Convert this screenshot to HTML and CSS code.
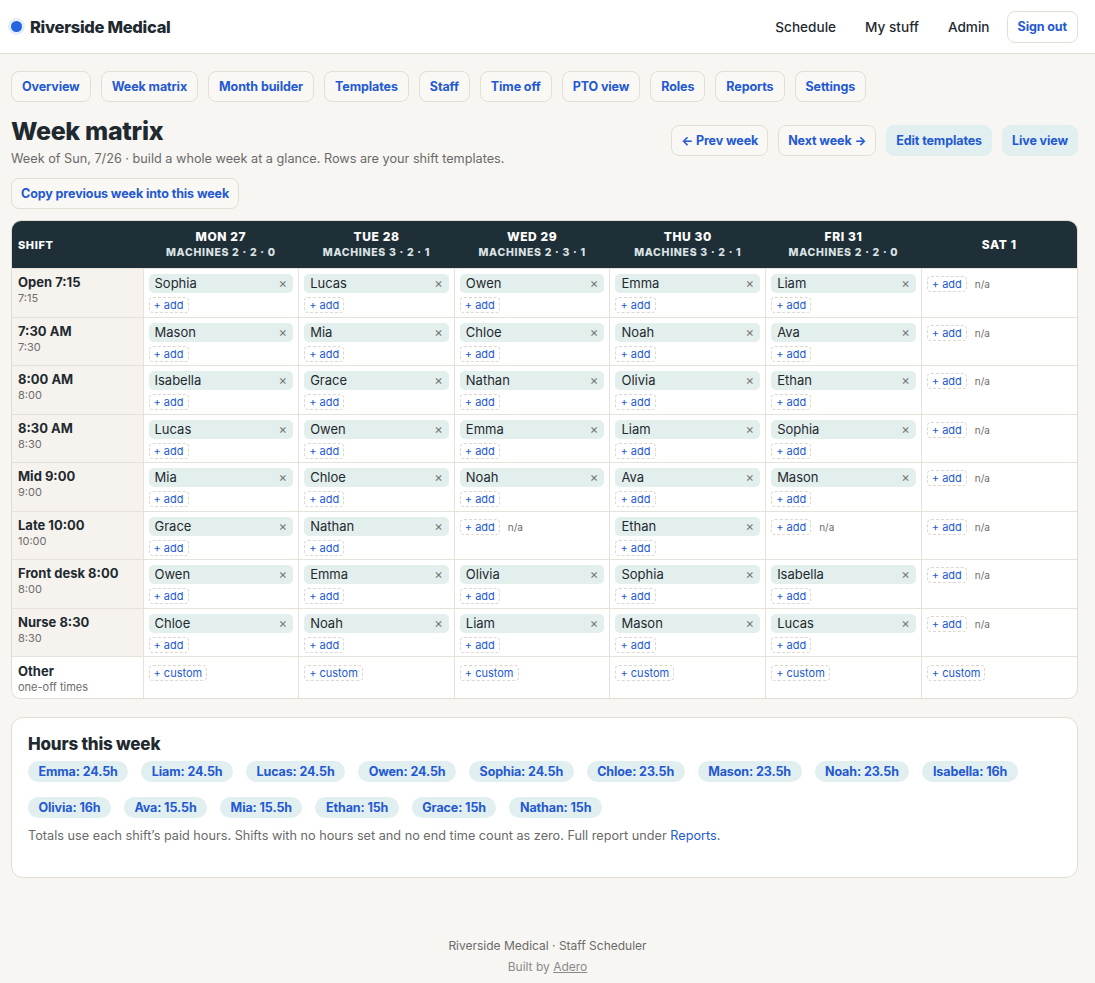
FILE: index.html
```html
<!DOCTYPE html>
<html>
	<head>
		<meta charset="UTF-8">
		<title>Week matrix · Riverside Medical</title>
		<link rel="stylesheet" href="styles.css">
	</head>
	<body>
		<header class="topbar">
			<div class="brand"><span class="dot"></span>Riverside Medical</div>
			<nav class="topnav">
				<a href="#">Schedule</a>
				<a href="#">My stuff</a>
				<a href="#">Admin</a>
				<button class="btn">Sign out</button>
			</nav>
		</header>
		<div class="page">
			<div class="tabs">
				<button class="btn">Overview</button>
				<button class="btn">Week matrix</button>
				<button class="btn">Month builder</button>
				<button class="btn">Templates</button>
				<button class="btn">Staff</button>
				<button class="btn">Time off</button>
				<button class="btn">PTO view</button>
				<button class="btn">Roles</button>
				<button class="btn">Reports</button>
				<button class="btn">Settings</button>
			</div>
			<div class="titlerow">
				<div>
					<h1>Week matrix</h1>
					<p class="sub">Week of Sun, 7/26 · build a whole week at a glance. Rows are your shift templates.</p>
					<button class="btn">Copy previous week into this week</button>
				</div>
				<div class="actions">
					<button class="btn">&larr; Prev week</button>
					<button class="btn">Next week &rarr;</button>
					<button class="btn soft">Edit templates</button>
					<button class="btn soft">Live view</button>
				</div>
			</div>

			<div class="matrix">
				<table>
					<colgroup>
						<col class="c-shift"><col><col><col><col><col><col>
					</colgroup>
					<thead>
						<tr>
							<th class="left">SHIFT</th>
							<th>MON 27<span>MACHINES 2 · 2 · 0</span></th>
							<th>TUE 28<span>MACHINES 3 · 2 · 1</span></th>
							<th>WED 29<span>MACHINES 2 · 3 · 1</span></th>
							<th>THU 30<span>MACHINES 3 · 2 · 1</span></th>
							<th>FRI 31<span>MACHINES 2 · 2 · 0</span></th>
							<th>SAT 1</th>
						</tr>
					</thead>
					<tbody>
						<tr>
							<td class="shift"><b>Open 7:15</b><small>7:15</small></td>
							<td><div class="chip">Sophia<i>&times;</i></div><span class="add">+ add</span></td>
							<td><div class="chip">Lucas<i>&times;</i></div><span class="add">+ add</span></td>
							<td><div class="chip">Owen<i>&times;</i></div><span class="add">+ add</span></td>
							<td><div class="chip">Emma<i>&times;</i></div><span class="add">+ add</span></td>
							<td><div class="chip">Liam<i>&times;</i></div><span class="add">+ add</span></td>
							<td><div class="na"><span class="add">+ add</span>n/a</div></td>
						</tr>
						<tr>
							<td class="shift"><b>7:30 AM</b><small>7:30</small></td>
							<td><div class="chip">Mason<i>&times;</i></div><span class="add">+ add</span></td>
							<td><div class="chip">Mia<i>&times;</i></div><span class="add">+ add</span></td>
							<td><div class="chip">Chloe<i>&times;</i></div><span class="add">+ add</span></td>
							<td><div class="chip">Noah<i>&times;</i></div><span class="add">+ add</span></td>
							<td><div class="chip">Ava<i>&times;</i></div><span class="add">+ add</span></td>
							<td><div class="na"><span class="add">+ add</span>n/a</div></td>
						</tr>
						<tr>
							<td class="shift"><b>8:00 AM</b><small>8:00</small></td>
							<td><div class="chip">Isabella<i>&times;</i></div><span class="add">+ add</span></td>
							<td><div class="chip">Grace<i>&times;</i></div><span class="add">+ add</span></td>
							<td><div class="chip">Nathan<i>&times;</i></div><span class="add">+ add</span></td>
							<td><div class="chip">Olivia<i>&times;</i></div><span class="add">+ add</span></td>
							<td><div class="chip">Ethan<i>&times;</i></div><span class="add">+ add</span></td>
							<td><div class="na"><span class="add">+ add</span>n/a</div></td>
						</tr>
						<tr>
							<td class="shift"><b>8:30 AM</b><small>8:30</small></td>
							<td><div class="chip">Lucas<i>&times;</i></div><span class="add">+ add</span></td>
							<td><div class="chip">Owen<i>&times;</i></div><span class="add">+ add</span></td>
							<td><div class="chip">Emma<i>&times;</i></div><span class="add">+ add</span></td>
							<td><div class="chip">Liam<i>&times;</i></div><span class="add">+ add</span></td>
							<td><div class="chip">Sophia<i>&times;</i></div><span class="add">+ add</span></td>
							<td><div class="na"><span class="add">+ add</span>n/a</div></td>
						</tr>
						<tr>
							<td class="shift"><b>Mid 9:00</b><small>9:00</small></td>
							<td><div class="chip">Mia<i>&times;</i></div><span class="add">+ add</span></td>
							<td><div class="chip">Chloe<i>&times;</i></div><span class="add">+ add</span></td>
							<td><div class="chip">Noah<i>&times;</i></div><span class="add">+ add</span></td>
							<td><div class="chip">Ava<i>&times;</i></div><span class="add">+ add</span></td>
							<td><div class="chip">Mason<i>&times;</i></div><span class="add">+ add</span></td>
							<td><div class="na"><span class="add">+ add</span>n/a</div></td>
						</tr>
						<tr>
							<td class="shift"><b>Late 10:00</b><small>10:00</small></td>
							<td><div class="chip">Grace<i>&times;</i></div><span class="add">+ add</span></td>
							<td><div class="chip">Nathan<i>&times;</i></div><span class="add">+ add</span></td>
							<td><div class="na"><span class="add">+ add</span>n/a</div></td>
							<td><div class="chip">Ethan<i>&times;</i></div><span class="add">+ add</span></td>
							<td><div class="na"><span class="add">+ add</span>n/a</div></td>
							<td><div class="na"><span class="add">+ add</span>n/a</div></td>
						</tr>
						<tr>
							<td class="shift"><b>Front desk 8:00</b><small>8:00</small></td>
							<td><div class="chip">Owen<i>&times;</i></div><span class="add">+ add</span></td>
							<td><div class="chip">Emma<i>&times;</i></div><span class="add">+ add</span></td>
							<td><div class="chip">Olivia<i>&times;</i></div><span class="add">+ add</span></td>
							<td><div class="chip">Sophia<i>&times;</i></div><span class="add">+ add</span></td>
							<td><div class="chip">Isabella<i>&times;</i></div><span class="add">+ add</span></td>
							<td><div class="na"><span class="add">+ add</span>n/a</div></td>
						</tr>
						<tr>
							<td class="shift"><b>Nurse 8:30</b><small>8:30</small></td>
							<td><div class="chip">Chloe<i>&times;</i></div><span class="add">+ add</span></td>
							<td><div class="chip">Noah<i>&times;</i></div><span class="add">+ add</span></td>
							<td><div class="chip">Liam<i>&times;</i></div><span class="add">+ add</span></td>
							<td><div class="chip">Mason<i>&times;</i></div><span class="add">+ add</span></td>
							<td><div class="chip">Lucas<i>&times;</i></div><span class="add">+ add</span></td>
							<td><div class="na"><span class="add">+ add</span>n/a</div></td>
						</tr>
						<tr class="other">
							<td class="shift white"><b>Other</b><small>one-off times</small></td>
							<td><span class="add">+ custom</span></td>
							<td><span class="add">+ custom</span></td>
							<td><span class="add">+ custom</span></td>
							<td><span class="add">+ custom</span></td>
							<td><span class="add">+ custom</span></td>
							<td><span class="add">+ custom</span></td>
						</tr>
					</tbody>
				</table>
			</div>

			<div class="card">
				<h2>Hours this week</h2>
				<div class="pills">
					<span class="pill">Emma: 24.5h</span>
					<span class="pill">Liam: 24.5h</span>
					<span class="pill">Lucas: 24.5h</span>
					<span class="pill">Owen: 24.5h</span>
					<span class="pill">Sophia: 24.5h</span>
					<span class="pill">Chloe: 23.5h</span>
					<span class="pill">Mason: 23.5h</span>
					<span class="pill">Noah: 23.5h</span>
					<span class="pill">Isabella: 16h</span>
					<span class="pill">Olivia: 16h</span>
					<span class="pill">Ava: 15.5h</span>
					<span class="pill">Mia: 15.5h</span>
					<span class="pill">Ethan: 15h</span>
					<span class="pill">Grace: 15h</span>
					<span class="pill">Nathan: 15h</span>
				</div>
				<p class="note">Totals use each shift’s paid hours. Shifts with no hours set and no end time count as zero. Full report under <a href="#">Reports</a>.</p>
			</div>
		</div>
		<footer class="foot">
			<p>Riverside Medical · Staff Scheduler</p>
			<p class="built">Built by <a href="#">Adero</a></p>
		</footer>
	</body>
</html>
```
FILE: styles.css
```css
body{
	margin: 0;
	padding: 0;
	background: #f8f6f2;
	font-family: Inter, "Noto Sans", sans-serif;
	color: #1f2a30;
}
a{
	text-decoration: none;
}
.btn{
	font-family: inherit;
	font-size: 12.5px;
	font-weight: 700;
	color: #2359d1;
	background: #faf8f5;
	border: 1px solid #e4dfd5;
	border-radius: 8px;
	height: 31px;
	padding: 0 9px;
	cursor: pointer;
	letter-spacing: -0.1px;
}
.btn.soft{
	background: #e2eff0;
	border-color: #e2eff0;
}
.topbar{
	display: flex;
	align-items: center;
	justify-content: space-between;
	height: 53px;
	padding: 0 17px 0 11px;
	background: #fff;
	border-bottom: 1px solid #e2ddd4;
}
.brand{
	display: flex;
	align-items: center;
	gap: 8px;
	font-size: 16.5px;
	font-weight: 800;
	color: #1f2a30;
	letter-spacing: -0.3px;
}
.dot{
	width: 11px;
	height: 11px;
	border-radius: 50%;
	background: #2563e0;
	box-shadow: 0 0 0 3px #e3eefa;
}
.topnav{
	display: flex;
	align-items: center;
	gap: 29px;
}
.topnav a{
	color: #1f2a30;
	font-size: 13.6px;
	font-weight: 500;
}
.topnav .btn{
	background: #fff;
	margin-left: -12px;
	height: 32px;
	padding: 0 10px;
}
.page{
	padding: 17px 17px 0 11px;
}
.tabs{
	display: flex;
	gap: 10px;
}
.tabs .btn{
	padding: 0 10px;
}
.titlerow{
	display: flex;
	justify-content: space-between;
	align-items: flex-start;
	margin-top: 14px;
}
h1{
	margin: 0;
	font-size: 25px;
	font-weight: 800;
	letter-spacing: -0.3px;
	line-height: 30px;
}
.sub{
	margin: 5px 0 12px;
	font-size: 12.7px;
	color: #6a6a6a;
}
.actions{
	display: flex;
	gap: 10px;
	padding-top: 9px;
}
.matrix{
	margin-top: 11px;
	background: #fff;
	border: 1px solid #e2ddd3;
	border-radius: 10px;
	overflow: hidden;
}
table{
	width: 100%;
	border-collapse: collapse;
	table-layout: fixed;
}
.c-shift{
	width: 131px;
}
thead th{
	background: #1f2f37;
	color: #fff;
	height: 47px;
	font-size: 12px;
	font-weight: 800;
	letter-spacing: 0.6px;
	text-align: center;
	padding: 0;
	line-height: 16px;
}
thead th span{
	display: block;
	font-size: 10.5px;
	color: #dbe3e6;
	letter-spacing: 0.7px;
}
thead th.left{
	text-align: left;
	padding-left: 6px;
	font-size: 11px;
}
tbody td{
	border: 1px solid #e6e2d9;
	vertical-align: top;
	padding: 5px 5px 0;
	height: 42.5px;
	font-size: 11px;
	line-height: 1;
}
tbody tr td:first-child{
	border-left: none;
}
tbody tr td:last-child{
	border-right: none;
}
tbody tr:last-child td{
	border-bottom: none;
}
.shift{
	background: #f6f3ee;
}
.shift.white{
	background: #fff;
}
.shift b{
	display: block;
	font-size: 13px;
	font-weight: 700;
	line-height: 16px;
	padding-left: 1px;
}
.shift small{
	display: block;
	font-size: 11px;
	color: #6d6d6d;
	line-height: 16px;
	padding-left: 1px;
}
.chip{
	display: flex;
	justify-content: space-between;
	align-items: center;
	background: #e3efed;
	border-radius: 5px;
	height: 19px;
	padding: 0 6px;
	font-size: 13px;
	color: #1f2a30;
	margin-bottom: 4px;
}
.chip i{
	font-style: normal;
	color: #777;
	font-size: 13px;
}
.add{
	display: inline-block;
	vertical-align: top;
	border: 1px dashed #dcd7cf;
	border-radius: 4px;
	height: 14px;
	line-height: 14px;
	padding: 0 4px;
	font-size: 11px;
	color: #2359d1;
}
.na{
	display: flex;
	align-items: center;
	gap: 8px;
	font-size: 10px;
	color: #6d6d6d;
	padding-top: 2px;
}
.other td{
	padding-top: 8px;
	height: 33px;
}
.other .shift{
	padding-top: 6px;
}
.card{
	margin-top: 18px;
	background: #fff;
	border: 1px solid #e2ddd3;
	border-radius: 12px;
	padding: 16px 16px 34px;
}
h2{
	margin: 0 0 7px;
	font-size: 17px;
	font-weight: 800;
	letter-spacing: -0.2px;
}
.pills{
	display: flex;
	flex-wrap: wrap;
	gap: 15px 13px;
}
.pill{
	background: #e2eff0;
	color: #2359d1;
	font-size: 12.5px;
	font-weight: 700;
	border-radius: 999px;
	height: 21px;
	line-height: 21px;
	padding: 0 10.5px;
	letter-spacing: -0.1px;
}
.note{
	margin: 10px 0 0;
	font-size: 12.7px;
	color: #6a6a6a;
}
.note a{
	color: #2359d1;
}
.foot{
	text-align: center;
	font-size: 12px;
	color: #6a6a6a;
	padding-top: 60px;
}
.foot p{
	margin: 0 0 6px;
}
.foot .built{
	color: #8a8a8a;
}
.foot .built a{
	color: #8a8a8a;
	text-decoration: underline;
}
```
